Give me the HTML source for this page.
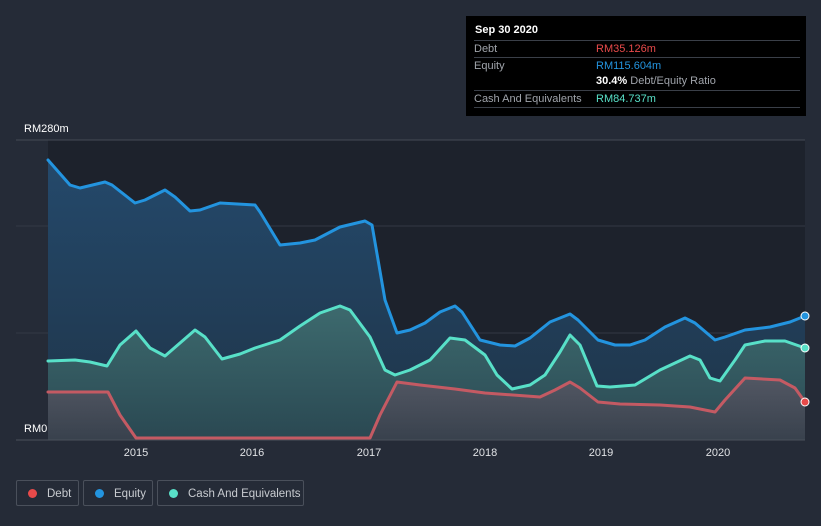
<html><head><style>
body{margin:0;width:821px;height:526px;background:#252b37;font-family:"Liberation Sans",sans-serif;overflow:hidden;position:relative}
.tt{position:absolute;left:466px;top:16px;width:340px;height:100px;background:#000;color:#fff;font-size:11px}
.tt .r{position:absolute;left:8px;right:6px;border-top:1px solid #3a3f48;height:16px;line-height:17px;color:#a0a4ab}
.tt .v{position:absolute;left:122px}
.lg{position:absolute;top:480px;height:26px;border:1px solid #4a505b;border-radius:2px;color:#c8cbd0;font-size:11.5px;line-height:26px;box-sizing:border-box;white-space:nowrap;overflow:hidden}
.lg i{display:inline-block;width:9px;height:9px;border-radius:50%;margin:0 10px 0 11px;vertical-align:-1px}
</style></head><body>
<svg width="821" height="526" style="position:absolute;left:0;top:0">
<defs>
<linearGradient id="ge" x1="0" y1="0" x2="0" y2="1"><stop offset="0" stop-color="#24496b"/><stop offset="1" stop-color="#1f3448"/></linearGradient>
<linearGradient id="gc" x1="0" y1="0" x2="0" y2="1"><stop offset="0" stop-color="#3d6a6e"/><stop offset="1" stop-color="#2a4852"/></linearGradient>
<linearGradient id="gd" x1="0" y1="0" x2="0" y2="1"><stop offset="0" stop-color="#585764"/><stop offset="1" stop-color="#3b404c"/></linearGradient>
</defs>
<rect x="48" y="140" width="757" height="300" fill="#1d222c"/>
<line x1="16" y1="140" x2="805" y2="140" stroke="#454b56"/>
<line x1="16" y1="226" x2="805" y2="226" stroke="#323844"/>
<line x1="16" y1="333" x2="805" y2="333" stroke="#323844"/>
<polygon fill="url(#ge)" points="48,440 48,160 70,185 80,188 105,182 112,185 135,203 145,200 165,190 175,197 190,211 200,210 220,203 255,205 260,212 280,245 300,243 315,240 340,227 365,221 372,225 385,300 397,333 410,330 425,323 440,312 455,306 462,312 480,340 500,345 515,346 530,338 550,322 570,314 578,320 598,340 615,345 630,345 645,340 665,327 685,318 695,323 715,340 725,337 745,330 770,327 790,322 805,316 805,440"/>
<polygon fill="url(#gc)" points="48,440 48,361 75,360 90,362 107,366 120,345 136,331 150,348 165,356 180,343 195,330 205,337 222,359 240,354 255,348 280,340 300,326 320,313 340,306 350,310 370,337 385,370 395,375 410,370 430,360 450,338 465,340 485,355 497,375 512,389 530,385 545,375 560,352 570,335 580,345 597,386 610,387 635,385 660,370 690,356 700,360 710,378 720,381 735,360 745,345 765,341 785,341 805,348 805,440"/>
<polygon fill="url(#gd)" opacity="0.85" points="48,440 48,392 108,392 120,415 136,438 370,438 380,415 397,382 420,385 455,389 485,393 540,397 555,390 570,382 580,388 598,402 620,404 660,405 690,407 715,412 725,400 745,378 780,380 795,388 805,402 805,440"/>
<g fill="none" stroke-width="3" stroke-linejoin="round" stroke-linecap="round">
<polyline stroke="#2394df" points="48,160 70,185 80,188 105,182 112,185 135,203 145,200 165,190 175,197 190,211 200,210 220,203 255,205 260,212 280,245 300,243 315,240 340,227 365,221 372,225 385,300 397,333 410,330 425,323 440,312 455,306 462,312 480,340 500,345 515,346 530,338 550,322 570,314 578,320 598,340 615,345 630,345 645,340 665,327 685,318 695,323 715,340 725,337 745,330 770,327 790,322 805,316"/>
<polyline stroke="#58e0c8" points="48,361 75,360 90,362 107,366 120,345 136,331 150,348 165,356 180,343 195,330 205,337 222,359 240,354 255,348 280,340 300,326 320,313 340,306 350,310 370,337 385,370 395,375 410,370 430,360 450,338 465,340 485,355 497,375 512,389 530,385 545,375 560,352 570,335 580,345 597,386 610,387 635,385 660,370 690,356 700,360 710,378 720,381 735,360 745,345 765,341 785,341 805,348"/>
<polyline stroke="#c45a63" points="48,392 108,392 120,415 136,438 370,438 380,415 397,382 420,385 455,389 485,393 540,397 555,390 570,382 580,388 598,402 620,404 660,405 690,407 715,412 725,400 745,378 780,380 795,388 805,402"/>
</g>
<line x1="16" y1="440" x2="805" y2="440" stroke="#4a505b"/>
<circle cx="805" cy="316" r="4" fill="#2394df" stroke="#fff" stroke-width="1"/>
<circle cx="805" cy="348" r="4" fill="#58e0c8" stroke="#fff" stroke-width="1"/>
<circle cx="805" cy="402" r="4" fill="#e84a4a" stroke="#fff" stroke-width="1"/>
<g fill="#fff" font-size="11" font-family="Liberation Sans">
<text x="24" y="132">RM280m</text><text x="24" y="432">RM0</text>
<g text-anchor="middle" fill="#e0e2e5"><text x="136" y="456">2015</text><text x="252" y="456">2016</text><text x="369" y="456">2017</text><text x="485" y="456">2018</text><text x="601" y="456">2019</text><text x="718" y="456">2020</text></g>
</g>
</svg>
<div class="tt">
<div style="position:absolute;left:9px;top:8px;font-weight:bold;font-size:11px">Sep 30 2020</div>
<div class="r" style="top:24px">Debt<span class="v" style="color:#e84a4a">RM35.126m</span></div>
<div class="r" style="top:41px">Equity<span class="v" style="color:#2394df">RM115.604m</span></div>
<div class="r" style="top:57px;border-top:none"><span class="v"><b style="color:#fff">30.4%</b> Debt/Equity Ratio</span></div>
<div class="r" style="top:74px">Cash And Equivalents<span class="v" style="color:#58e0c8">RM84.737m</span></div>
<div class="r" style="top:91px;height:0"></div>
</div>
<div class="lg" style="left:16px;width:63px"><i style="background:#e84a4a"></i>Debt</div>
<div class="lg" style="left:83px;width:70px"><i style="background:#2394df"></i>Equity</div>
<div class="lg" style="left:157px;width:147px"><i style="background:#58e0c8"></i>Cash And Equivalents</div>
</body></html>
